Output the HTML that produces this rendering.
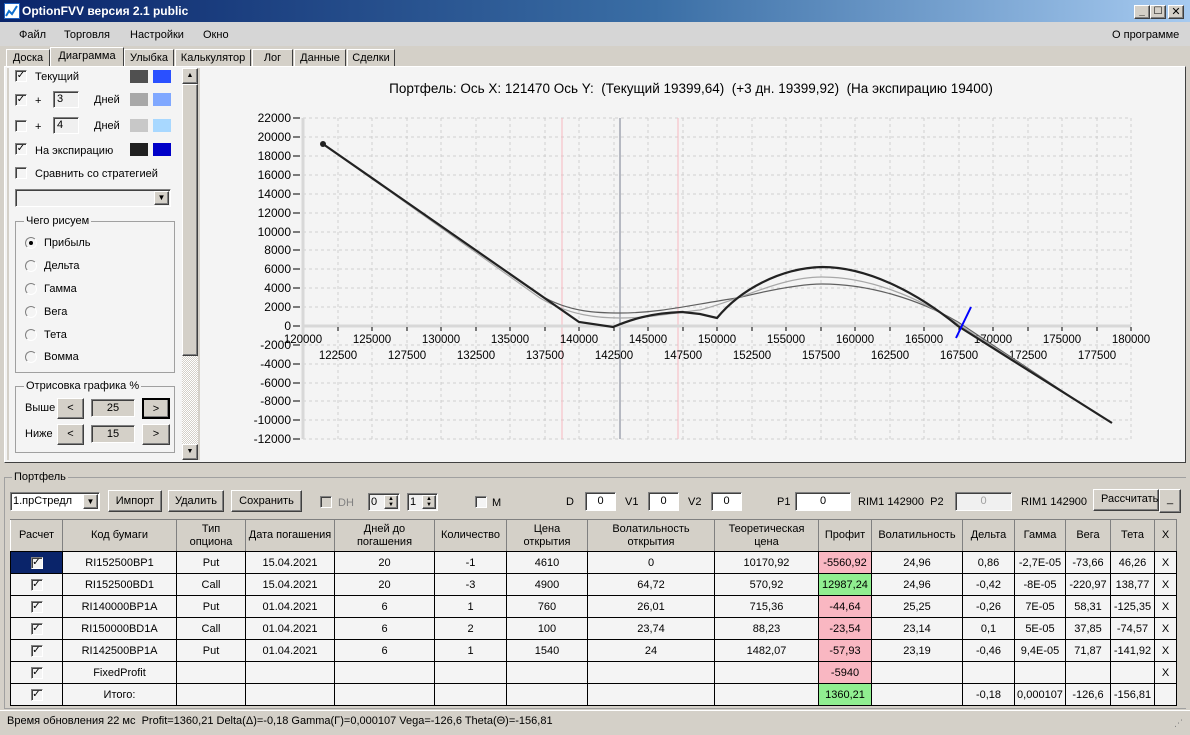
<!DOCTYPE html>
<html><head><meta charset="utf-8">
<style>
*{box-sizing:border-box;margin:0;padding:0}
body{width:1190px;height:735px;position:relative;overflow:hidden;background:#d4d0c8;font-family:"Liberation Sans","DejaVu Sans",sans-serif;font-size:11px;color:#000}
.a{position:absolute}
.title{left:0;top:0;width:1190px;height:22px;background:linear-gradient(90deg,#0a246a,#3a6ea5 55%,#a6caf0);color:#fff;font-weight:bold;font-size:12px;line-height:22px;padding-left:22px}
.btn{background:#d4d0c8;border:1px solid;border-color:#fff #404040 #404040 #fff;box-shadow:inset -1px -1px 0 #808080;text-align:center}
.inp{background:#f0f0f0;border:1px solid;border-color:#808080 #fff #fff #808080;box-shadow:inset 1px 1px 0 #404040;text-align:center}
.cb{width:12px;height:12px;background:#f4f4f4;border:1px solid;border-color:#808080 #fff #fff #808080;box-shadow:inset 1px 1px 0 #404040;font-size:10px;line-height:10px;text-align:center;font-weight:bold}
.rb{width:12px;height:12px;border-radius:50%;background:#f4f4f4;border:1px solid;border-color:#808080 #fff #fff #808080}
.tab{top:49px;height:18px;background:#d4d0c8;border:1px solid;border-color:#fff #404040 transparent #fff;line-height:16px;text-align:center;font-size:11px}
table{border-collapse:collapse;table-layout:fixed;position:absolute;left:10px;top:519px;background:#f4f4f4}
td,th{border:1px solid #000;text-align:center;font-weight:normal;font-size:11px;height:22px;padding:0;overflow:hidden;white-space:nowrap}
th{background:#d4d0c8;height:32px;line-height:13px;white-space:normal;border-color:#808080 #808080 #000 #fff}
.pk{background:#f9b7c2}.gr{background:#90ee90}
</style></head><body>
<div class="a title">OptionFVV версия 2.1 public</div>
<div class="a" style="left:4px;top:3px;width:16px;height:16px;background:#fff;border:1px solid #2060c0"><svg width="14" height="14"><path d="M1 12 L4 7 L7 10 L12 2" stroke="#1070d0" stroke-width="2" fill="none"/></svg></div>
<div class="a btn" style="left:1134px;top:5px;width:16px;height:14px;font-size:10px;line-height:12px;font-weight:bold">_</div>
<div class="a btn" style="left:1150px;top:5px;width:16px;height:14px;font-size:10px;line-height:12px">☐</div>
<div class="a btn" style="left:1168px;top:5px;width:16px;height:14px;font-size:11px;line-height:12px;font-weight:bold">✕</div>
<div class="a" style="left:0;top:22px;width:1190px;height:24px;background:#d6d6d6"></div>
<div class="a" style="left:19px;top:29px">Файл</div>
<div class="a" style="left:64px;top:29px">Торговля</div>
<div class="a" style="left:130px;top:29px">Настройки</div>
<div class="a" style="left:203px;top:29px">Окно</div>
<div class="a" style="left:1112px;top:29px">О программе</div>

<div class="a tab" style="left:6px;width:44px">Доска</div>
<div class="a tab" style="left:50px;top:47px;height:21px;width:74px;background:#d4d0c8;border-bottom:none">Диаграмма</div>
<div class="a tab" style="left:124px;width:50px">Улыбка</div>
<div class="a tab" style="left:175px;width:76px">Калькулятор</div>
<div class="a tab" style="left:252px;width:41px">Лог</div>
<div class="a tab" style="left:294px;width:52px">Данные</div>
<div class="a tab" style="left:347px;width:48px">Сделки</div>

<div class="a" style="left:4px;top:66px;width:1182px;height:397px;border:1px solid;border-color:#fff #404040 #404040 #fff;background:#f4f4f4"></div>
<div class="a" style="left:7px;top:68px;width:2px;height:392px;background:#d4d0c8"></div>
<div class="a" style="left:198px;top:68px;width:2px;height:392px;background:#d4d0c8"></div>
<!-- left panel -->
<div class="a cb" style="left:15px;top:70px">✓</div><div class="a" style="left:35px;top:71px">Текущий</div>
<div class="a" style="left:130px;top:70px;width:18px;height:13px;background:#505050"></div><div class="a" style="left:153px;top:70px;width:18px;height:13px;background:#2a50ff"></div>
<div class="a cb" style="left:15px;top:94px">✓</div><div class="a" style="left:35px;top:95px">+</div>
<div class="a inp" style="left:53px;top:91px;width:26px;height:17px;text-align:left;padding-left:3px;line-height:14px">3</div>
<div class="a" style="left:94px;top:94px">Дней</div>
<div class="a" style="left:130px;top:93px;width:18px;height:13px;background:#a8a8a8"></div><div class="a" style="left:153px;top:93px;width:18px;height:13px;background:#80a8ff"></div>
<div class="a cb" style="left:15px;top:120px"></div><div class="a" style="left:35px;top:121px">+</div>
<div class="a inp" style="left:53px;top:117px;width:26px;height:17px;text-align:left;padding-left:3px;line-height:14px">4</div>
<div class="a" style="left:94px;top:120px">Дней</div>
<div class="a" style="left:130px;top:119px;width:18px;height:13px;background:#c8c8c8"></div><div class="a" style="left:153px;top:119px;width:18px;height:13px;background:#a8d8ff"></div>
<div class="a cb" style="left:15px;top:143px">✓</div><div class="a" style="left:35px;top:145px">На экспирацию</div>
<div class="a" style="left:130px;top:143px;width:18px;height:13px;background:#202020"></div><div class="a" style="left:153px;top:143px;width:18px;height:13px;background:#0000c8"></div>
<div class="a cb" style="left:15px;top:167px"></div><div class="a" style="left:35px;top:168px">Сравнить со стратегией</div>
<div class="a inp" style="left:15px;top:189px;width:156px;height:18px"></div>
<div class="a btn" style="left:154px;top:191px;width:15px;height:14px;font-size:8px;line-height:12px">▼</div>
<div class="a" style="left:15px;top:221px;width:160px;height:152px;border:1px solid #a0a0a0"></div>
<div class="a" style="left:24px;top:215px;background:#f4f4f4;padding:0 2px">Чего рисуем</div>
<div class="a rb" style="left:25px;top:237px"><div style="width:4px;height:4px;background:#000;border-radius:50%;margin:3px"></div></div><div class="a" style="left:44px;top:237px">Прибыль</div>
<div class="a rb" style="left:25px;top:260px"></div><div class="a" style="left:44px;top:260px">Дельта</div>
<div class="a rb" style="left:25px;top:283px"></div><div class="a" style="left:44px;top:283px">Гамма</div>
<div class="a rb" style="left:25px;top:306px"></div><div class="a" style="left:44px;top:306px">Вега</div>
<div class="a rb" style="left:25px;top:329px"></div><div class="a" style="left:44px;top:329px">Тета</div>
<div class="a rb" style="left:25px;top:351px"></div><div class="a" style="left:44px;top:351px">Вомма</div>
<div class="a" style="left:15px;top:386px;width:160px;height:67px;border:1px solid #a0a0a0"></div>
<div class="a" style="left:24px;top:380px;background:#f4f4f4;padding:0 2px">Отрисовка графика %</div>
<div class="a" style="left:25px;top:402px">Выше</div>
<div class="a btn" style="left:57px;top:398px;width:27px;height:21px;line-height:19px">&lt;</div>
<div class="a inp" style="left:91px;top:399px;width:44px;height:18px;background:#d4d0c8;line-height:16px">25</div>
<div class="a btn" style="left:142px;top:398px;width:28px;height:21px;line-height:19px;border:2px solid #000">&gt;</div>
<div class="a" style="left:25px;top:428px">Ниже</div>
<div class="a btn" style="left:57px;top:424px;width:27px;height:21px;line-height:19px">&lt;</div>
<div class="a inp" style="left:91px;top:425px;width:44px;height:18px;background:#d4d0c8;line-height:16px">15</div>
<div class="a btn" style="left:142px;top:424px;width:28px;height:21px;line-height:19px">&gt;</div>
<!-- scrollbar -->
<div class="a" style="left:182px;top:68px;width:16px;height:392px;background:repeating-conic-gradient(#d4d0c8 0 25%,#fff 0 50%) 0 0/2px 2px"></div>
<div class="a btn" style="left:182px;top:68px;width:16px;height:16px;font-size:7px;line-height:14px">▲</div>
<div class="a btn" style="left:182px;top:84px;width:16px;height:272px"></div>
<div class="a btn" style="left:182px;top:444px;width:16px;height:16px;font-size:7px;line-height:14px">▼</div>

<!-- chart -->
<div class="a" style="left:200px;top:81px;width:982px;text-align:center;font-size:13.5px;padding-left:0">Портфель: Ось X: 121470 Ось Y:&nbsp; (Текущий 19399,64)&nbsp; (+3 дн. 19399,92)&nbsp; (На экспирацию 19400)</div>
<svg class="a" style="left:0;top:0" width="1190" height="735" font-family="Liberation Sans, sans-serif" font-size="12">
<g stroke="#cfcfcf" stroke-dasharray="3,3" stroke-width="1">
<line x1="303" y1="118" x2="1131" y2="118"/><line x1="303" y1="137" x2="1131" y2="137"/><line x1="303" y1="156" x2="1131" y2="156"/><line x1="303" y1="175" x2="1131" y2="175"/><line x1="303" y1="194" x2="1131" y2="194"/><line x1="303" y1="213" x2="1131" y2="213"/><line x1="303" y1="232" x2="1131" y2="232"/><line x1="303" y1="250" x2="1131" y2="250"/><line x1="303" y1="269" x2="1131" y2="269"/><line x1="303" y1="288" x2="1131" y2="288"/><line x1="303" y1="307" x2="1131" y2="307"/><line x1="303" y1="345" x2="1131" y2="345"/><line x1="303" y1="364" x2="1131" y2="364"/><line x1="303" y1="383" x2="1131" y2="383"/><line x1="303" y1="401" x2="1131" y2="401"/><line x1="303" y1="420" x2="1131" y2="420"/><line x1="303" y1="439" x2="1131" y2="439"/>
<line x1="338" y1="118" x2="338" y2="439"/><line x1="372" y1="118" x2="372" y2="439"/><line x1="407" y1="118" x2="407" y2="439"/><line x1="441" y1="118" x2="441" y2="439"/><line x1="476" y1="118" x2="476" y2="439"/><line x1="510" y1="118" x2="510" y2="439"/><line x1="545" y1="118" x2="545" y2="439"/><line x1="579" y1="118" x2="579" y2="439"/><line x1="614" y1="118" x2="614" y2="439"/><line x1="648" y1="118" x2="648" y2="439"/><line x1="683" y1="118" x2="683" y2="439"/><line x1="717" y1="118" x2="717" y2="439"/><line x1="752" y1="118" x2="752" y2="439"/><line x1="786" y1="118" x2="786" y2="439"/><line x1="821" y1="118" x2="821" y2="439"/><line x1="855" y1="118" x2="855" y2="439"/><line x1="890" y1="118" x2="890" y2="439"/><line x1="924" y1="118" x2="924" y2="439"/><line x1="959" y1="118" x2="959" y2="439"/><line x1="993" y1="118" x2="993" y2="439"/><line x1="1028" y1="118" x2="1028" y2="439"/><line x1="1062" y1="118" x2="1062" y2="439"/><line x1="1097" y1="118" x2="1097" y2="439"/><line x1="1131" y1="118" x2="1131" y2="439"/>
</g>
<line x1="562" y1="118" x2="562" y2="439" stroke="#f8b8c0"/>
<line x1="678" y1="118" x2="678" y2="439" stroke="#f8b8c0"/>
<line x1="620" y1="118" x2="620" y2="439" stroke="#a0a4b0" stroke-width="1.5"/>
<line x1="303" y1="118" x2="303" y2="439" stroke="#d8d8d8" stroke-width="3"/>
<line x1="303" y1="326" x2="1131" y2="326" stroke="#d8d8d8" stroke-width="3"/>
<g stroke="#000"><line x1="293" y1="118" x2="300" y2="118"/><line x1="293" y1="137" x2="300" y2="137"/><line x1="293" y1="156" x2="300" y2="156"/><line x1="293" y1="175" x2="300" y2="175"/><line x1="293" y1="194" x2="300" y2="194"/><line x1="293" y1="213" x2="300" y2="213"/><line x1="293" y1="232" x2="300" y2="232"/><line x1="293" y1="250" x2="300" y2="250"/><line x1="293" y1="269" x2="300" y2="269"/><line x1="293" y1="288" x2="300" y2="288"/><line x1="293" y1="307" x2="300" y2="307"/><line x1="293" y1="326" x2="300" y2="326"/><line x1="293" y1="345" x2="300" y2="345"/><line x1="293" y1="364" x2="300" y2="364"/><line x1="293" y1="383" x2="300" y2="383"/><line x1="293" y1="401" x2="300" y2="401"/><line x1="293" y1="420" x2="300" y2="420"/><line x1="293" y1="439" x2="300" y2="439"/>
<path d="M338 327v4M372 327v4M407 327v4M441 327v4M476 327v4M510 327v4M545 327v4M579 327v4M614 327v4M648 327v4M683 327v4M717 327v4M752 327v4M786 327v4M821 327v4M855 327v4M890 327v4M924 327v4M959 327v4M993 327v4M1028 327v4M1062 327v4M1097 327v4M1131 327v4"/></g>
<g text-anchor="end" fill="#000"><text x="291" y="122">22000</text><text x="291" y="141">20000</text><text x="291" y="160">18000</text><text x="291" y="179">16000</text><text x="291" y="198">14000</text><text x="291" y="217">12000</text><text x="291" y="236">10000</text><text x="291" y="254">8000</text><text x="291" y="273">6000</text><text x="291" y="292">4000</text><text x="291" y="311">2000</text><text x="291" y="330">0</text><text x="291" y="349">-2000</text><text x="291" y="368">-4000</text><text x="291" y="387">-6000</text><text x="291" y="405">-8000</text><text x="291" y="424">-10000</text><text x="291" y="443">-12000</text></g>
<g text-anchor="middle" fill="#000" font-size="11.5"><text x="303" y="343">120000</text><text x="372" y="343">125000</text><text x="441" y="343">130000</text><text x="510" y="343">135000</text><text x="579" y="343">140000</text><text x="648" y="343">145000</text><text x="717" y="343">150000</text><text x="786" y="343">155000</text><text x="855" y="343">160000</text><text x="924" y="343">165000</text><text x="993" y="343">170000</text><text x="1062" y="343">175000</text><text x="1131" y="343">180000</text>
<text x="338" y="359">122500</text><text x="407" y="359">127500</text><text x="476" y="359">132500</text><text x="545" y="359">137500</text><text x="614" y="359">142500</text><text x="683" y="359">147500</text><text x="752" y="359">152500</text><text x="821" y="359">157500</text><text x="890" y="359">162500</text><text x="959" y="359">167500</text><text x="1028" y="359">172500</text><text x="1097" y="359">177500</text></g>
<path d="M323 144 L540 295 C570 313 600 313 620 313 C660 313 690 305 737 298 C770 290 800 284 822 284 C870 284 920 300 958 322 L1100 416" stroke="#606060" stroke-width="1.2" fill="none"/>
<path d="M323 144 L540 298 C570 316 600 318 620 318 C650 318 680 312 700 310 C740 300 780 277 822 277 C870 277 920 298 958 324 L1105 419" stroke="#a8a8a8" stroke-width="1.2" fill="none"/>
<path d="M323 144 L579 322 L613 327 C630 320 650 313 682 312 L700 314 L717 318 C740 290 780 268 822 267 C870 267 920 295 958 326 L1112 423" stroke="#222" stroke-width="2.2" fill="none"/>
<circle cx="323" cy="144" r="3" fill="#222"/>
<line x1="956" y1="338" x2="971" y2="307" stroke="#0000ff" stroke-width="2"/>
</svg>

<!-- portfolio -->
<div class="a" style="left:4px;top:477px;width:1182px;height:232px;border:1px solid #a0a0a0;border-right:none"></div>
<div class="a" style="left:12px;top:471px;background:#d4d0c8;padding:0 2px">Портфель</div>
<div class="a inp" style="left:10px;top:492px;width:90px;height:19px;background:#fff;text-align:left;padding-left:2px;line-height:16px">1.прСтредл</div>
<div class="a btn" style="left:83px;top:494px;width:15px;height:15px;font-size:8px;line-height:13px">▼</div>
<div class="a btn" style="left:108px;top:490px;width:54px;height:22px;line-height:20px">Импорт</div>
<div class="a btn" style="left:168px;top:490px;width:56px;height:22px;line-height:20px">Удалить</div>
<div class="a btn" style="left:231px;top:490px;width:71px;height:22px;line-height:20px">Сохранить</div>
<div class="a cb" style="left:320px;top:496px;background:#d4d0c8"></div><div class="a" style="left:338px;top:497px;color:#808080">DH</div>
<div class="a inp" style="left:368px;top:493px;width:32px;height:18px;text-align:left;padding-left:2px;line-height:16px">0</div>
<div class="a btn" style="left:384px;top:495px;width:14px;height:14px;font-size:6px;line-height:6px">▲<br>▼</div>
<div class="a inp" style="left:407px;top:493px;width:31px;height:18px;text-align:left;padding-left:2px;line-height:16px">1</div>
<div class="a btn" style="left:422px;top:495px;width:14px;height:14px;font-size:6px;line-height:6px">▲<br>▼</div>
<div class="a cb" style="left:475px;top:496px"></div><div class="a" style="left:492px;top:497px">M</div>
<div class="a" style="left:566px;top:496px">D</div><div class="a inp" style="left:585px;top:492px;width:31px;height:19px;line-height:17px;background:#fff">0</div>
<div class="a" style="left:625px;top:496px">V1</div><div class="a inp" style="left:648px;top:492px;width:31px;height:19px;line-height:17px;background:#fff">0</div>
<div class="a" style="left:688px;top:496px">V2</div><div class="a inp" style="left:711px;top:492px;width:31px;height:19px;line-height:17px;background:#fff">0</div>
<div class="a" style="left:777px;top:496px">P1</div><div class="a inp" style="left:795px;top:492px;width:56px;height:19px;line-height:17px;background:#fff">0</div>
<div class="a" style="left:858px;top:496px">RIM1 142900&nbsp; P2</div>
<div class="a inp" style="left:955px;top:492px;width:57px;height:19px;line-height:17px;color:#a0a0a0">0</div>
<div class="a" style="left:1021px;top:496px">RIM1 142900</div>
<div class="a btn" style="left:1093px;top:489px;width:66px;height:22px;line-height:18px;overflow:hidden;text-align:left;padding-left:7px">Рассчитать</div>
<div class="a btn" style="left:1159px;top:489px;width:22px;height:24px;line-height:18px">_</div>

<table>
<colgroup><col style="width:52px"><col style="width:114px"><col style="width:69px"><col style="width:89px"><col style="width:100px"><col style="width:72px"><col style="width:81px"><col style="width:127px"><col style="width:104px"><col style="width:53px"><col style="width:91px"><col style="width:52px"><col style="width:51px"><col style="width:45px"><col style="width:44px"><col style="width:22px"></colgroup>
<tr><th>Расчет</th><th>Код бумаги</th><th style="padding:0 8px">Тип опциона</th><th>Дата погашения</th><th>Дней до погашения</th><th>Количество</th><th style="padding:0 10px">Цена открытия</th><th>Волатильность открытия</th><th>Теоретическая цена</th><th>Профит</th><th>Волатильность</th><th>Дельта</th><th>Гамма</th><th>Вега</th><th>Тета</th><th>X</th></tr>
<tr><td style="background:#0a246a"><div class="cb" style="margin:auto;display:inline-block">✓</div></td><td>RI152500BP1</td><td>Put</td><td>15.04.2021</td><td>20</td><td>-1</td><td>4610</td><td>0</td><td>10170,92</td><td class="pk">-5560,92</td><td>24,96</td><td>0,86</td><td>-2,7E-05</td><td>-73,66</td><td>46,26</td><td>X</td></tr>
<tr><td><div class="cb" style="display:inline-block">✓</div></td><td>RI152500BD1</td><td>Call</td><td>15.04.2021</td><td>20</td><td>-3</td><td>4900</td><td>64,72</td><td>570,92</td><td class="gr">12987,24</td><td>24,96</td><td>-0,42</td><td>-8E-05</td><td>-220,97</td><td>138,77</td><td>X</td></tr>
<tr><td><div class="cb" style="display:inline-block">✓</div></td><td>RI140000BP1A</td><td>Put</td><td>01.04.2021</td><td>6</td><td>1</td><td>760</td><td>26,01</td><td>715,36</td><td class="pk">-44,64</td><td>25,25</td><td>-0,26</td><td>7E-05</td><td>58,31</td><td>-125,35</td><td>X</td></tr>
<tr><td><div class="cb" style="display:inline-block">✓</div></td><td>RI150000BD1A</td><td>Call</td><td>01.04.2021</td><td>6</td><td>2</td><td>100</td><td>23,74</td><td>88,23</td><td class="pk">-23,54</td><td>23,14</td><td>0,1</td><td>5E-05</td><td>37,85</td><td>-74,57</td><td>X</td></tr>
<tr><td><div class="cb" style="display:inline-block">✓</div></td><td>RI142500BP1A</td><td>Put</td><td>01.04.2021</td><td>6</td><td>1</td><td>1540</td><td>24</td><td>1482,07</td><td class="pk">-57,93</td><td>23,19</td><td>-0,46</td><td>9,4E-05</td><td>71,87</td><td>-141,92</td><td>X</td></tr>
<tr><td><div class="cb" style="display:inline-block">✓</div></td><td>FixedProfit</td><td></td><td></td><td></td><td></td><td></td><td></td><td></td><td class="pk">-5940</td><td></td><td></td><td></td><td></td><td></td><td>X</td></tr>
<tr><td><div class="cb" style="display:inline-block">✓</div></td><td>Итого:</td><td></td><td></td><td></td><td></td><td></td><td></td><td></td><td class="gr">1360,21</td><td></td><td>-0,18</td><td>0,000107</td><td>-126,6</td><td>-156,81</td><td></td></tr>
</table>

<div class="a" style="left:0;top:710px;width:1190px;height:25px;border-top:1px solid #fff;background:#d4d0c8"></div>
<div class="a" style="left:7px;top:715px">Время обновления 22 мс&nbsp; Profit=1360,21 Delta(Δ)=-0,18 Gamma(Γ)=0,000107 Vega=-126,6 Theta(Θ)=-156,81</div>
<div class="a" style="left:1174px;top:718px;color:#808080;font-size:9px">⋰</div>
</body></html>
